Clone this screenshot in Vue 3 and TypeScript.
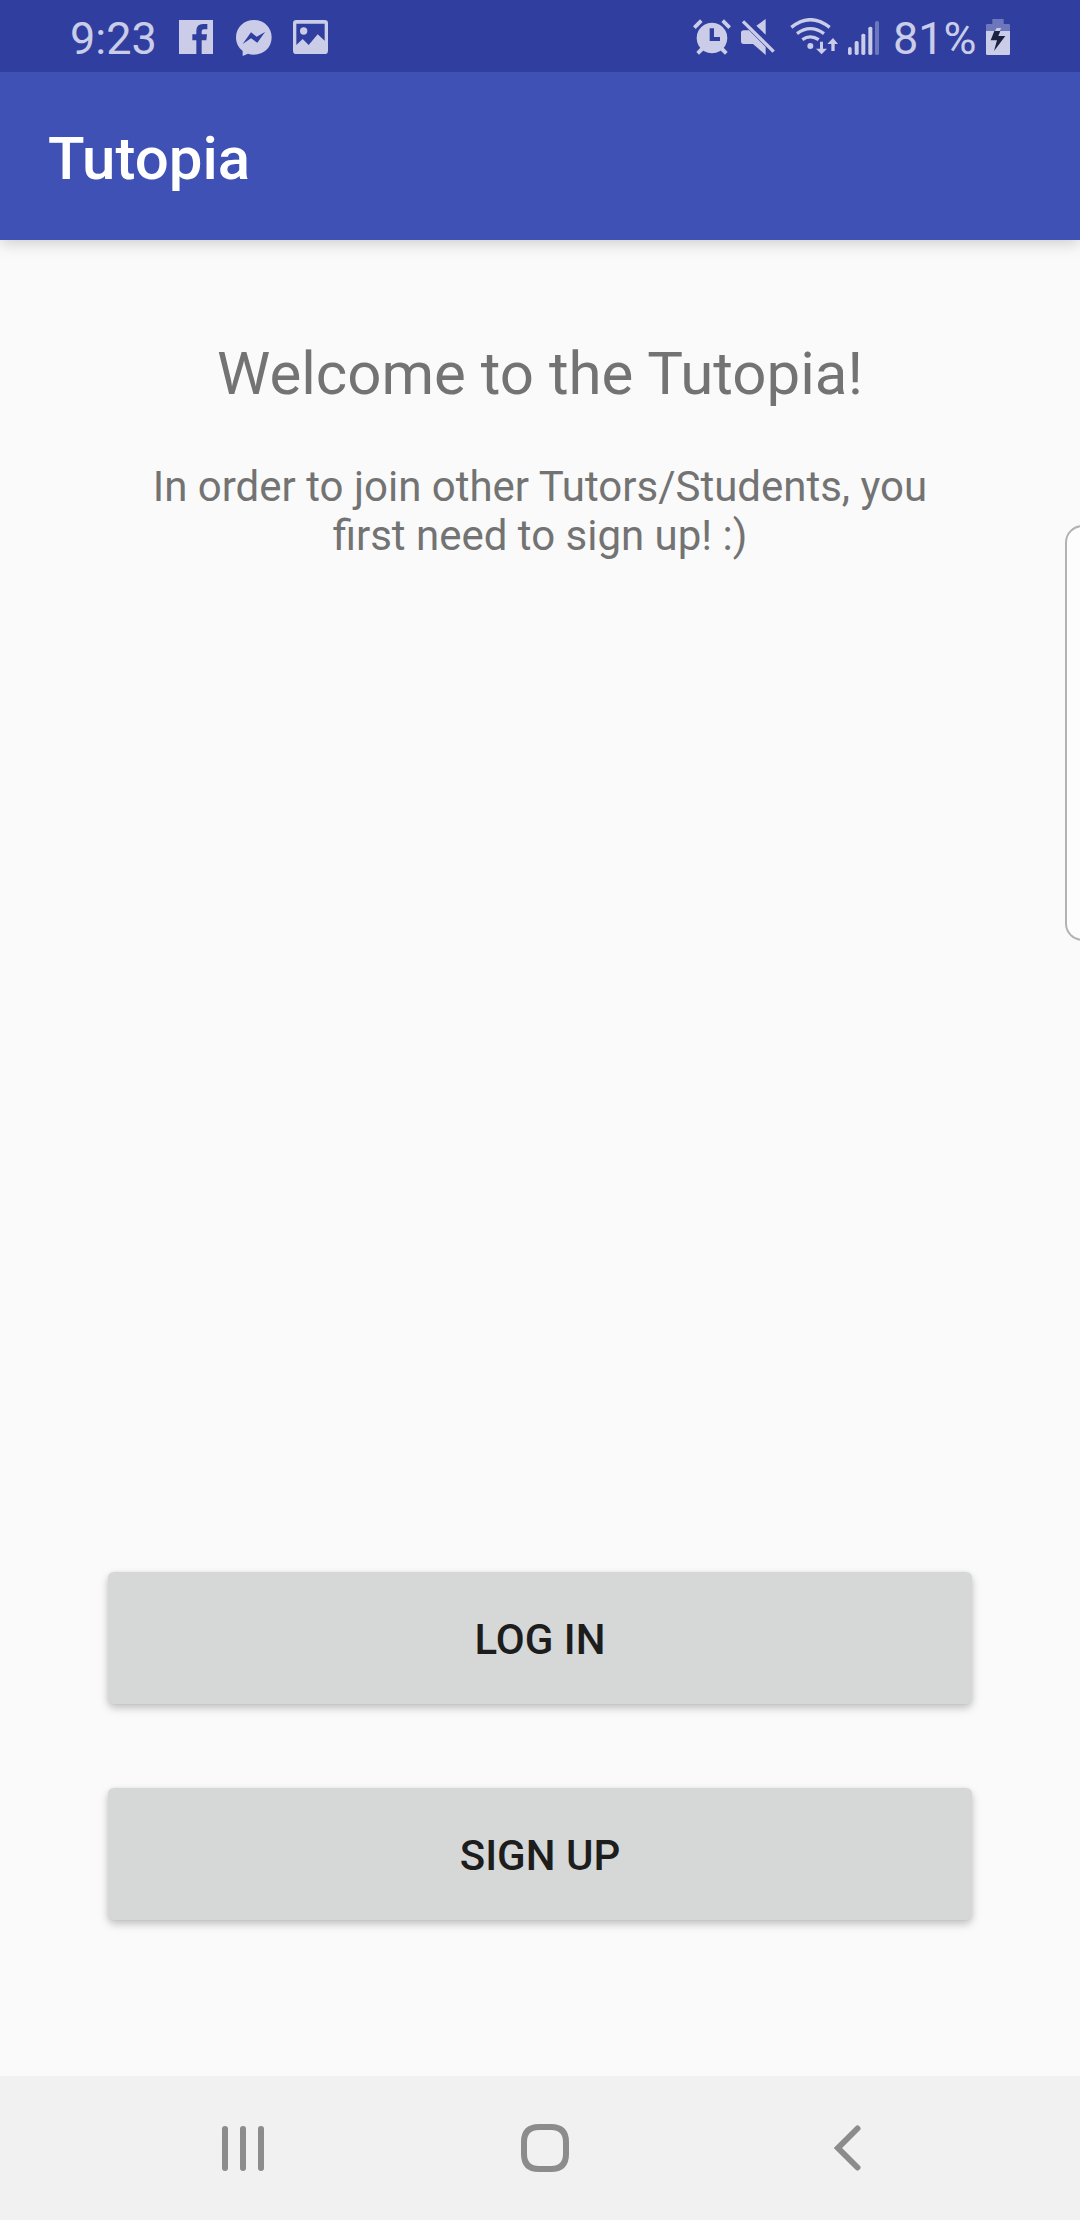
<script setup lang="ts">
import { ref } from 'vue'

interface Action {
  id: string
  label: string
}

const time = ref('9:23')
const battery = ref(81)
const actions: Action[] = [
  { id: 'login', label: 'Log in' },
  { id: 'signup', label: 'Sign up' },
]
</script>

<template>
  <div class="screen">
    <header class="status-bar">
      <span class="clock">{{ time }}</span>
      <svg class="facebook" viewBox="0 0 102 102">
        <path
          fill-rule="evenodd"
          d="M0 0H102V102H68V61H82L84 43H68V34Q68 28 75 28H85V12H72Q52 12 52 33V43H40V61H52V102H0Z"
        />
      </svg>
      <svg class="messenger" viewBox="0 0 108 108">
        <path
          fill-rule="evenodd"
          d="M54 0C84 0 107 22 107 52S84 104 54 104Q44 104 36 101L20 108V93C7 83 0 69 0 52C0 22 24 0 54 0ZM20 72L45 37L62 50L87 36L64 68L45 55Z"
        />
      </svg>
      <svg class="gallery" viewBox="0 0 105 102">
        <path
          fill-rule="evenodd"
          d="M10 0H95Q105 0 105 10V92Q105 102 95 102H10Q0 102 0 92V10Q0 0 10 0ZM10 11V75L29 57L47 75L74 43L95 62V11Z"
        />
        <circle cx="32" cy="33" r="11" />
      </svg>

      <div class="system">
        <svg class="alarm" viewBox="0 0 114 108">
          <path
            fill-rule="evenodd"
            d="M57 11A46 46 0 1 1 56.9 11ZM50 28V66H81V54H63V28Z"
          />
          <path d="M0 22L21 1L29 9L8 30ZM114 22L93 1L85 9L106 30ZM10 99L24 84L33 93L18 107ZM104 99L90 84L81 93L96 107Z" />
        </svg>
        <svg class="mute" viewBox="0 0 102 108">
          <path d="M0 42Q0 34 8 34H24L74 84V108L36 75H8Q0 75 0 67ZM74 0V47L46 20Z" />
          <path class="line" d="M6 7L98 98" stroke-width="10" />
        </svg>
        <svg class="wifi" viewBox="0 0 144 111">
          <g class="line" stroke-width="10">
            <path d="M4 28Q61 -18 119 28" />
            <path d="M21 47Q61 17 102 47" />
            <path d="M37 65Q61 48 86 65" />
          </g>
          <circle cx="61" cy="84" r="9" />
          <path d="M90 71H99V92H111L95 109L78 92H90ZM124 99H134V78H144L129 60L112 78H124Z" />
        </svg>
        <svg class="signal" viewBox="0 0 93 102">
          <rect x="0" y="78" width="11" height="24" rx="5" />
          <rect x="20" y="60" width="12" height="42" rx="5" />
          <rect x="40" y="38" width="12" height="64" rx="5" />
          <rect x="61" y="17" width="12" height="85" rx="5" />
          <rect x="81" y="0" width="12" height="102" rx="5" opacity=".4" />
        </svg>
        <span class="level">{{ battery }}%</span>
        <svg class="battery" viewBox="0 0 72 108">
          <path opacity=".4" d="M19 0H53V15H68Q72 15 72 19V36H0V19Q0 15 4 15H19Z" />
          <path d="M0 36H72V104Q72 108 68 108H4Q0 108 0 104Z" />
          <path d="M27 36L32 27H46L41 36Z" />
          <path class="bolt" d="M25 36H43L37 51H58L24 96L33 64H14Z" />
        </svg>
      </div>
    </header>

    <div class="app-bar"><h1>Tutopia</h1></div>

    <main>
      <h2>Welcome to the Tutopia!</h2>
      <p>In order to join other Tutors/Students, you first need to sign up! :)</p>
      <div class="actions">
        <button v-for="action in actions" :key="action.id" type="button">{{ action.label }}</button>
      </div>
    </main>

    <nav>
      <svg class="recents" viewBox="0 0 42 45">
        <path d="M3 3V42M21 3V42M39 3V42" />
      </svg>
      <svg class="home" viewBox="0 0 48 48">
        <path d="M18 3H30Q45 3 45 18V30Q45 45 30 45H18Q3 45 3 30V18Q3 3 18 3Z" />
      </svg>
      <svg class="back" viewBox="0 0 27 46">
        <path d="M23.5 3.5L4 23L23.5 42.5" />
      </svg>
    </nav>

    <div class="edge-handle"></div>
  </div>
</template>

<style>
body {
  margin: 0;
  background: #fafafa;
}
</style>

<style scoped>
.screen {
  position: relative;
  display: flex;
  flex-direction: column;
  width: 1080px;
  height: 2220px;
  overflow: hidden;
  background: #fafafa;
  font-family: Roboto, 'Noto Sans', sans-serif;
}

svg {
  display: block;
  flex: none;
}

.status-bar {
  position: relative;
  z-index: 1;
  display: flex;
  align-items: flex-start;
  box-sizing: border-box;
  height: 72px;
  padding: 0 70px;
  background: #303f9f;
  color: #cacce8;
  fill: #cacce8;
}

.clock,
.level {
  font-size: 45px;
  line-height: 53px;
  margin-top: 12px;
}

.clock {
  width: 109px;
}

.facebook {
  width: 34px;
  height: 34px;
  margin-top: 20px;
}

.messenger {
  width: 36px;
  height: 36px;
  margin: 20px 0 0 23px;
}

.gallery {
  width: 35px;
  height: 34px;
  margin: 20px 0 0 21px;
}

.system {
  display: flex;
  align-items: flex-start;
  margin-left: auto;
}

.alarm {
  width: 38px;
  height: 36px;
  margin: 19px 10px 0 0;
}

.mute {
  width: 34px;
  height: 36px;
  margin: 19px 15px 0 0;
}

.wifi {
  width: 48px;
  height: 37px;
  margin: 18px 10px 0 0;
}

.signal {
  width: 31px;
  height: 34px;
  margin: 21px 14px 0 0;
}

.level {
  width: 93px;
}

.battery {
  width: 24px;
  height: 36px;
  margin-top: 19px;
}

.line {
  fill: none;
  stroke: #cacce8;
}

.bolt {
  fill: #1b2140;
}

.app-bar {
  box-sizing: border-box;
  flex: none;
  height: 168px;
  padding: 51px 48px 0;
  background: #3f51b5;
  color: #fff;
  box-shadow: 0 4px 14px rgba(0, 0, 0, 0.17);
}

h1 {
  margin: 0;
  font-size: 60px;
  font-weight: 500;
  line-height: 71px;
}

main {
  display: flex;
  flex: 1;
  flex-direction: column;
  align-items: center;
  padding: 98px 108px 156px;
  color: #737373;
  text-align: center;
}

h2 {
  margin: 0;
  font-size: 60px;
  font-weight: 400;
  line-height: 71px;
}

p {
  width: 820px;
  margin: 53px 0 0;
  font-size: 42px;
  line-height: 49px;
}

.actions {
  display: flex;
  flex-direction: column;
  gap: 84px;
  width: 864px;
  margin-top: auto;
}

button {
  height: 132px;
  padding: 3px 0 0;
  border: 0;
  border-radius: 6px;
  background: #d6d8d7;
  box-shadow: 0 4px 8px rgba(0, 0, 0, 0.23), 0 0 3px rgba(0, 0, 0, 0.06);
  color: #1d1d1d;
  font-family: inherit;
  font-size: 42px;
  font-weight: 500;
  line-height: 49px;
  text-transform: uppercase;
}

nav {
  display: flex;
  align-items: center;
  box-sizing: border-box;
  height: 144px;
  padding-left: 222px;
  background: #f1f1f1;
  fill: none;
  stroke: #8c8c8c;
  stroke-width: 6;
  stroke-linecap: round;
}

.recents {
  width: 42px;
  height: 45px;
}

.home {
  width: 48px;
  height: 48px;
  margin: 0 265px 0 257px;
}

.back {
  width: 27px;
  height: 46px;
}

.edge-handle {
  position: absolute;
  top: 525px;
  right: -20px;
  box-sizing: border-box;
  width: 35px;
  height: 416px;
  border: 2px solid #b2b2b2;
  border-radius: 18px;
  background: #fdfdfd;
}
</style>
